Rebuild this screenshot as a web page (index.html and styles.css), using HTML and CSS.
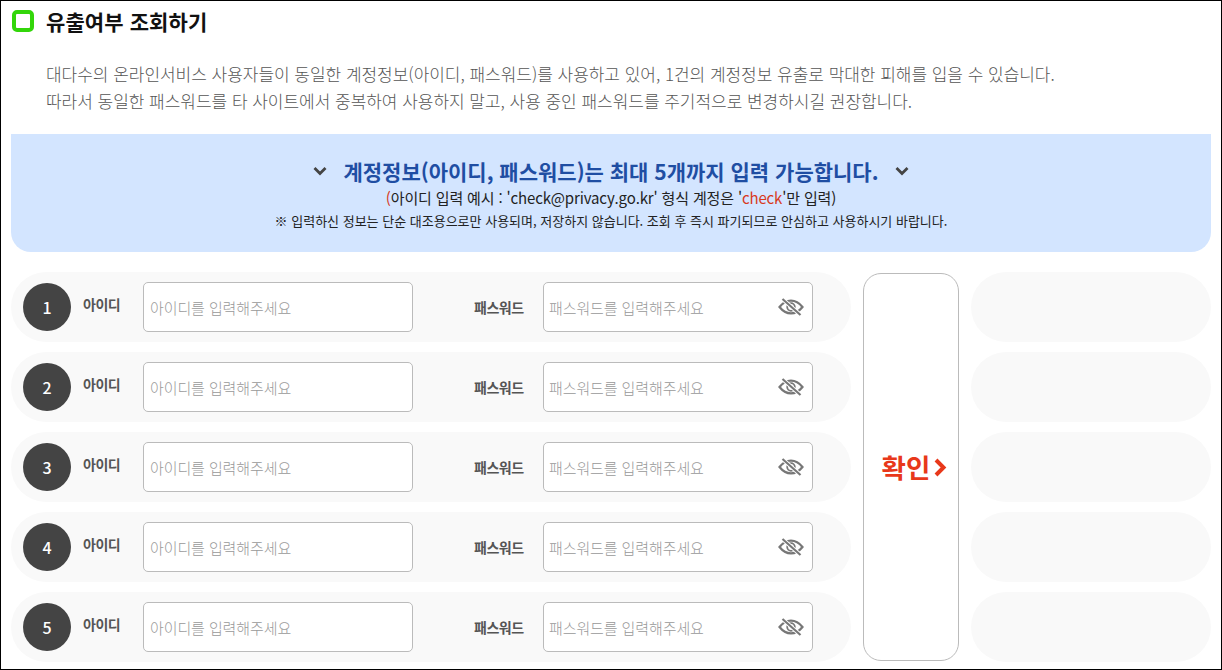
FILE: index.html
```html
<!DOCTYPE html>
<html lang="ko">
<head>
<meta charset="utf-8">
<title>유출여부 조회하기</title>
<link rel="stylesheet" href="styles.css">
</head>
<body>
<svg class="defs" width="0" height="0" aria-hidden="true">
  <symbol id="eye-off" viewBox="0 0 26 18">
    <path d="M1.500 9C5 4.600 8.800 2.600 13 2.600S21 4.600 24.500 9C21 13.400 17.200 15.400 13 15.400S5 13.400 1.500 9Z" fill="none" stroke="#777" stroke-width="2.200"/>
    <circle cx="13" cy="9" r="3.800" fill="none" stroke="#777" stroke-width="1.800"/>
    <path d="M5 1.500 22 16.500" stroke="#fff" stroke-width="4"/>
    <path d="M4.500 1 22.500 17" stroke="#777" stroke-width="2.200"/>
  </symbol>
</svg>
<main class="page">
  <h1 class="title"><span class="title-mark"></span>유출여부 조회하기</h1>
  <div class="intro">
    <p>대다수의 온라인서비스 사용자들이 동일한 계정정보(아이디, 패스워드)를 사용하고 있어, 1건의 계정정보 유출로 막대한 피해를 입을 수 있습니다.</p>
    <p>따라서 동일한 패스워드를 타 사이트에서 중복하여 사용하지 말고, 사용 중인 패스워드를 주기적으로 변경하시길 권장합니다.</p>
  </div>
  <section class="notice">
    <div class="notice-head">
      <svg class="chev" viewBox="0 0 14 10"><path d="M1.500 2 7 7.500 12.500 2" fill="none" stroke="#444" stroke-width="2.800"/></svg>
      <strong>계정정보(아이디, 패스워드)는 최대 5개까지 입력 가능합니다.</strong>
      <svg class="chev" viewBox="0 0 14 10"><path d="M1.500 2 7 7.500 12.500 2" fill="none" stroke="#444" stroke-width="2.800"/></svg>
    </div>
    <p class="notice-sub"><span class="red">(</span>아이디 입력 예시 : 'check@privacy.go.kr' 형식 계정은 '<span class="red">check</span>'만 입력)</p>
    <p class="notice-small">※ 입력하신 정보는 단순 대조용으로만 사용되며, 저장하지 않습니다. 조회 후 즉시 파기되므로 안심하고 사용하시기 바랍니다.</p>
  </section>
  <section class="form">
    <div class="rows">
      <div class="row">
        <span class="num">1</span><span class="lbl lbl-id">아이디</span>
        <div class="field field-id">아이디를 입력해주세요</div>
        <span class="lbl lbl-pw">패스워드</span>
        <div class="field field-pw">패스워드를 입력해주세요<svg class="eye"><use href="#eye-off"/></svg></div>
      </div>
      <div class="row">
        <span class="num">2</span><span class="lbl lbl-id">아이디</span>
        <div class="field field-id">아이디를 입력해주세요</div>
        <span class="lbl lbl-pw">패스워드</span>
        <div class="field field-pw">패스워드를 입력해주세요<svg class="eye"><use href="#eye-off"/></svg></div>
      </div>
      <div class="row">
        <span class="num">3</span><span class="lbl lbl-id">아이디</span>
        <div class="field field-id">아이디를 입력해주세요</div>
        <span class="lbl lbl-pw">패스워드</span>
        <div class="field field-pw">패스워드를 입력해주세요<svg class="eye"><use href="#eye-off"/></svg></div>
      </div>
      <div class="row">
        <span class="num">4</span><span class="lbl lbl-id">아이디</span>
        <div class="field field-id">아이디를 입력해주세요</div>
        <span class="lbl lbl-pw">패스워드</span>
        <div class="field field-pw">패스워드를 입력해주세요<svg class="eye"><use href="#eye-off"/></svg></div>
      </div>
      <div class="row">
        <span class="num">5</span><span class="lbl lbl-id">아이디</span>
        <div class="field field-id">아이디를 입력해주세요</div>
        <span class="lbl lbl-pw">패스워드</span>
        <div class="field field-pw">패스워드를 입력해주세요<svg class="eye"><use href="#eye-off"/></svg></div>
      </div>
    </div>
    <button class="confirm" type="button">확인<svg class="confirm-arrow" viewBox="0 0 13 19"><path d="M2 2 9.500 9.500 2 17" fill="none" stroke="#e8381a" stroke-width="4"/></svg></button>
    <div class="rows rows-empty">
      <div class="pill"></div><div class="pill"></div><div class="pill"></div><div class="pill"></div><div class="pill"></div>
    </div>
  </section>
</main>
</body>
</html>
```
FILE: styles.css
```css
* { box-sizing: border-box; }
html, body { margin: 0; padding: 0; background: #fff; }
body { width: 1222px; height: 670px; overflow: hidden; font-family: "Noto Sans CJK KR", "Noto Sans", sans-serif; }
.defs { display: block; height: 0; }
.page { width: 1222px; height: 670px; border: 1px solid #000; padding: 0 10px; overflow: hidden; }
p { margin: 0; }
.title { display: flex; align-items: center; margin: 5px 0 0 1px; height: 30px; font-size: 21px; font-weight: 700; line-height: 30px; color: #111; letter-spacing: 0.1px; }
.title-mark { width: 22px; height: 22px; border: 4px solid #33d60a; border-radius: 5px; margin-right: 12px; background: #fff; }
.intro { margin: 24px 0 0 35px; font-size: 17px; line-height: 27px; font-weight: 300; color: #555; letter-spacing: -0.03px; }
.notice { height: 118px; margin-top: 20px; background: #d3e5ff; border-radius: 0 0 20px 20px; text-align: center; padding-top: 19px; color: #222; }
.notice-head { display: flex; justify-content: center; align-items: center; gap: 16px; height: 36px; font-size: 21px; line-height: 36px; color: #1f4ea3; }
.notice-head strong { font-weight: 700; }
.chev { width: 14px; height: 10px; }
.notice-sub { font-size: 15px; line-height: 22px; font-weight: 400; letter-spacing: -0.15px; margin-top: -2px; }
.notice-small { font-size: 13px; line-height: 22px; font-weight: 400; margin-top: 1px; }
.red { color: #d8391c; }
.form { display: flex; align-items: flex-start; margin-top: 20px; }
.rows { display: flex; flex-direction: column; gap: 10px; width: 840px; }
.rows-empty { width: 240px; margin-left: 12px; }
.row, .pill { height: 70px; border-radius: 35px; background: #f9f9f9; }
.row { display: flex; align-items: center; padding-left: 12px; }
.num { flex: none; width: 48px; height: 48px; border-radius: 50%; background: #444; color: #fff; font-size: 16px; font-weight: 500; display: flex; align-items: center; justify-content: center; }
.lbl { font-size: 14px; font-weight: 700; color: #555; line-height: 20px; letter-spacing: -0.5px; }
.lbl-id { width: 60px; margin-left: 12px; position: relative; top: -3px; }
.lbl-pw { width: 49px; margin-left: 61px; margin-right: 20px; white-space: nowrap; }
.field { height: 50px; width: 270px; border: 1px solid #bbb; border-radius: 5px; background: #fff; display: flex; align-items: center; justify-content: space-between; font-size: 15px; font-weight: 300; color: #999; padding: 0 7px 0 6px; letter-spacing: -0.1px; }
.field-pw { padding-left: 5px; padding-right: 8px; }
.eye { width: 26px; height: 18px; flex: none; }
.confirm { flex: none; width: 96px; height: 388px; margin: 1px 0 0 12px; border: 1px solid #bbb; border-radius: 18px; background: #fff; color: #e8381a; font: 700 26.500px/30px "Noto Sans CJK KR", sans-serif; display: flex; align-items: center; justify-content: center; padding: 0 0 0 7px; gap: 4px; }
.confirm-arrow { width: 13px; height: 19px; }
```
